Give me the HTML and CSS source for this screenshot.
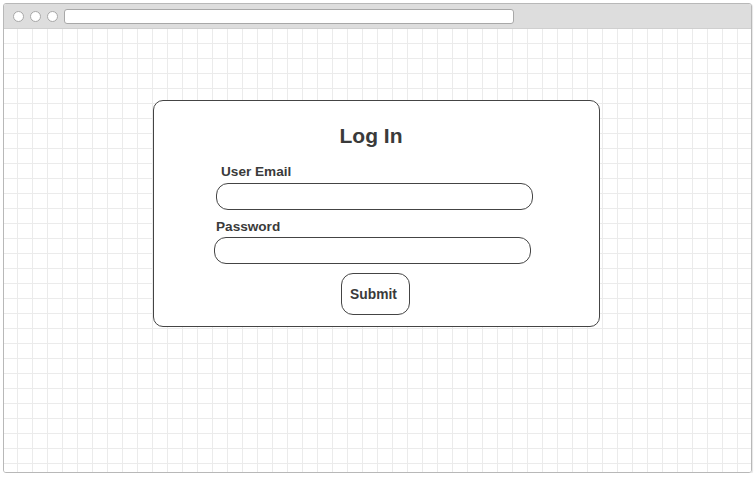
FILE: index.html
```html
<!DOCTYPE html>
<html>
<head>
<meta charset="utf-8">
<link rel="stylesheet" href="styles.css">
</head>
<body>
<div class="window">
  <div class="titlebar">
    <span class="dot"></span><span class="dot"></span><span class="dot"></span>
    <div class="address"></div>
  </div>
  <div class="canvas">
    <div class="card">
      <h1 class="title">Log In</h1>
      <label class="label label-email">User Email</label>
      <div class="input input-email"></div>
      <label class="label label-pass">Password</label>
      <div class="input input-pass"></div>
      <button class="submit">Submit</button>
    </div>
  </div>
</div>
</body>
</html>
```
FILE: styles.css
```css
html, body {
  margin: 0;
  padding: 0;
  background: #ffffff;
  font-family: "Liberation Sans", Arial, sans-serif;
}
.window {
  margin: 3px 0 0 3px;
  width: 749px;
  height: 470px;
  box-sizing: border-box;
  border: 1px solid #b8b8b8;
  border-radius: 3px;
  display: flex;
  flex-direction: column;
  overflow: hidden;
  box-shadow: 1px 1px 1px #e6e6e6;
}
.titlebar {
  height: 24px;
  flex: none;
  background: #dddddd;
  border-bottom: 1px solid #cfcfcf;
  display: flex;
  align-items: center;
  padding-left: 9px;
  gap: 6px;
}
.dot {
  width: 9px;
  height: 9px;
  border-radius: 50%;
  background: #ffffff;
  border: 1px solid #a8a8a8;
  flex: none;
}
.address {
  margin-left: 0;
  width: 448px;
  height: 13px;
  background: #ffffff;
  border: 1px solid #a8a8a8;
  border-radius: 3px;
}
.canvas {
  flex: 1;
  background-color: #ffffff;
  background-image:
    linear-gradient(to right, #ebebeb 1px, transparent 1px),
    linear-gradient(to bottom, #ebebeb 1px, transparent 1px);
  background-size: 15px 15px;
  background-position: 13px 14px;
  padding: 71px 0 0 149px;
}
.card {
  width: 447px;
  height: 227px;
  box-sizing: border-box;
  border: 1px solid #444444;
  border-radius: 10px;
  background: #ffffff;
  display: flex;
  flex-direction: column;
  align-items: flex-start;
  color: #3a3a3a;
}
.title {
  margin: 22px 11px 0 0;
  align-self: center;
  font-size: 21px;
  font-weight: bold;
  line-height: 26px;
}
.label {
  font-size: 13.6px;
  font-weight: bold;
  line-height: 16px;
}
.label-email {
  margin: 15px 0 0 67px;
}
.label-pass {
  margin: 9px 0 0 62px;
}
.input {
  height: 27px;
  width: 317px;
  box-sizing: border-box;
  border: 1px solid #444444;
  border-radius: 12px;
  background: #ffffff;
}
.input-email {
  margin: 3px 0 0 62px;
}
.input-pass {
  margin: 2px 0 0 60px;
}
.submit {
  margin: 9px 0 0 187px;
  width: 69px;
  height: 42px;
  box-sizing: border-box;
  border: 1px solid #444444;
  border-radius: 12px;
  background: #ffffff;
  font-family: "Liberation Sans", Arial, sans-serif;
  font-size: 13.8px;
  font-weight: bold;
  color: #3a3a3a;
  padding: 0 4px 0 0;
}
```
